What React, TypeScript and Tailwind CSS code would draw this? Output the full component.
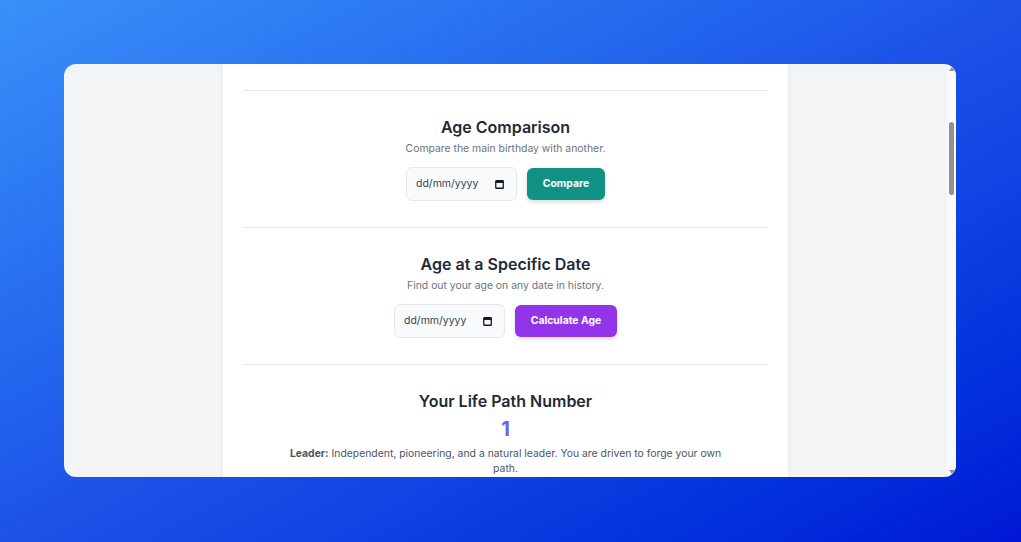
import React from "react";

function CalIcon() {
  return (
    <svg width="9" height="9" viewBox="0 0 9 9" className="shrink-0">
      <rect x="0.75" y="0.75" width="7.5" height="7.5" rx="0.6" fill="none" stroke="#111827" strokeWidth="1.3" />
      <rect x="0.75" y="0.75" width="7.5" height="2.2" fill="#111827" />
    </svg>
  );
}

function DateBox() {
  return (
    <div className="flex h-[34px] w-[111px] items-center justify-between rounded-[6px] border border-[#e5e7eb] bg-[#f9fafb] pl-[9px] pr-[12px] text-[10.5px] text-[#374151]">
      <span>dd/mm/yyyy</span>
      <CalIcon />
    </div>
  );
}

function Section({
  title,
  sub,
  button,
  btnClass,
  btnW,
}: {
  title: string;
  sub: string;
  button: string;
  btnClass: string;
  btnW: string;
}) {
  return (
    <div className="flex flex-col items-center pt-[25px] pb-[26px]">
      <h2 className="text-[16px] leading-[22px] font-semibold text-[#1f2937]">{title}</h2>
      <p className="mt-[3px] text-[10.4px] leading-[16px] text-[#6b7280]">{sub}</p>
      <div className="mt-[10px] flex items-center gap-[10px]">
        <DateBox />
        <button
          className={`flex h-[32px] ${btnW} items-center justify-center rounded-[6px] text-[10.4px] font-bold text-white shadow-[0_2px_4px_rgba(0,0,0,0.15)] ${btnClass}`}
        >
          {button}
        </button>
      </div>
    </div>
  );
}

export default function App() {
  return (
    <div
      className="flex h-[542px] w-[1021px] items-start justify-start bg-gradient-to-br from-[#3b90f8] via-[#1d52e8] to-[#0016d6] pt-[64px] pl-[64px]"
      style={{ fontFamily: "Inter, 'Noto Sans', sans-serif" }}
    >
      <div className="flex h-[413px] w-[892px] overflow-hidden rounded-[12px] bg-[#f3f4f6]">
        <div className="flex flex-1 justify-center">
          <div className="flex w-[565px] flex-col bg-white px-[21px] pt-[26px] shadow-[0_0_6px_rgba(0,0,0,0.06)]">
            <div className="border-t border-[#e5e7eb]" />
            <Section
              title="Age Comparison"
              sub="Compare the main birthday with another."
              button="Compare"
              btnClass="bg-[#0f9283]"
              btnW="w-[78px]"
            />
            <div className="border-t border-[#e5e7eb]" />
            <Section
              title="Age at a Specific Date"
              sub="Find out your age on any date in history."
              button="Calculate Age"
              btnClass="bg-[#9333ea]"
              btnW="w-[102px]"
            />
            <div className="border-t border-[#e5e7eb]" />
            <div className="flex flex-col items-center pt-[25px]">
              <h2 className="text-[16px] leading-[22px] font-semibold text-[#1f2937]">Your Life Path Number</h2>
              <div className="mt-[5px] text-[20px] leading-[24px] font-bold text-[#6366f1]">1</div>
              <p className="mt-[5px] w-[445px] text-center text-[10.4px] leading-[15px] text-[#4b5563]">
                <span className="font-bold">Leader:</span> Independent, pioneering, and a natural leader. You are driven to forge your own path.
              </p>
            </div>
          </div>
        </div>
        <div className="flex w-[9px] flex-col items-center bg-[#fafafa]">
          <div className="mt-[3px] h-0 w-0 border-x-[3px] border-b-[4px] border-x-transparent border-b-[#909090]" />
          <div className="mt-[51px] h-[73px] w-[5px] rounded-full bg-[#919191]" />
          <div className="flex-1" />
          <div className="mb-[3px] h-0 w-0 border-x-[3px] border-t-[4px] border-x-transparent border-t-[#909090]" />
        </div>
      </div>
    </div>
  );
}
